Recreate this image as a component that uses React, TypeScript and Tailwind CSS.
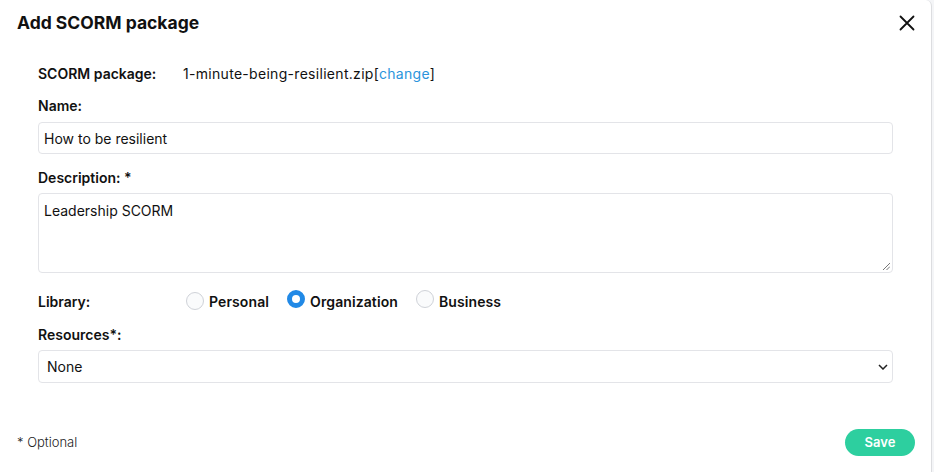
import React from "react";

function Radio({ checked }: { checked?: boolean }) {
  return checked ? (
    <span className="inline-block h-[18px] w-[18px] rounded-full border-[5px] border-[#2189e6] bg-white" />
  ) : (
    <span className="inline-block h-[18px] w-[18px] rounded-full border border-[#cfd2d8] bg-[#fafbfc]" />
  );
}

export default function App() {
  return (
    <div
      className="h-[472px] w-[934px] bg-[#f4f5f7] text-[#111]"
      style={{ fontFamily: "Inter, 'Open Sans', sans-serif" }}
    >
      <div className="flex h-full w-[932px] flex-col rounded-tr-md border-r border-[#dcdde0] bg-white">
        {/* header */}
        <div className="flex h-[46px] items-center justify-between pl-[17px] pr-[12px]">
          <h2 className="text-[17.5px] font-bold text-[#111]">Add SCORM package</h2>
          <button className="flex h-6 w-6 items-center justify-center">
            <svg width="16" height="16" viewBox="0 0 16 16" fill="none" stroke="#111" strokeWidth="1.8" strokeLinecap="round">
              <path d="M1.5 1.5l13 13M14.5 1.5l-13 13" />
            </svg>
          </button>
        </div>

        {/* form */}
        <div className="flex flex-col pl-[38px] pr-[38px] text-[14px]">
          <div className="mt-[17px] flex h-[20px] items-center">
            <span className="w-[145px] font-semibold">SCORM package:</span>
            <span className="tracking-[0.3px]">
              1-minute-being-resilient.zip[<span className="text-[#2a94dc]">change</span>]
            </span>
          </div>

          <label className="mt-[13px] h-[20px] font-semibold leading-[20px]">Name:</label>
          <div className="mt-[6px] flex h-[32px] items-center rounded-[4px] border border-[#e3e4e8] px-[5px]">
            How to be resilient
          </div>

          <label className="mt-[14px] h-[20px] font-semibold leading-[20px]">Description: *</label>
          <div className="relative mt-[5px] h-[80px] rounded-[4px] border border-[#e3e4e8] px-[5px] pt-[6px]">
            Leadership SCORM
            <svg className="absolute bottom-[2px] right-[2px]" width="8" height="8" viewBox="0 0 8 8" stroke="#777" strokeWidth="1">
              <path d="M1 8L8 1M4.5 8L8 4.5" />
            </svg>
          </div>

          <div className="mt-[18px] flex h-[20px] items-center">
            <span className="w-[148px] font-semibold">Library:</span>
            <div className="flex items-center font-semibold tracking-[0.1px]">
              <Radio />
              <span className="ml-[5px]">Personal</span>
              <span className="ml-[18px]"><Radio checked /></span>
              <span className="ml-[5px]">Organization</span>
              <span className="ml-[18px]"><Radio /></span>
              <span className="ml-[5px]">Business</span>
            </div>
          </div>

          <label className="mt-[14px] h-[20px] font-semibold leading-[20px]">Resources*:</label>
          <div className="mt-[5px] flex h-[33px] items-center justify-between rounded-[4px] border border-[#e3e4e8] pl-[8px] pr-[4px]">
            <span>None</span>
            <svg width="10" height="6" viewBox="0 0 10 6" fill="none" stroke="#222" strokeWidth="1.5">
              <path d="M1 1l4 4 4-4" />
            </svg>
          </div>
        </div>

        {/* footer */}
        <div className="mt-auto flex h-[44px] items-start justify-between pl-[17px] pr-[16px] pb-[16px]">
          <span className="mt-[5px] text-[13px] font-light text-[#222]">* Optional</span>
          <button className="mt-[1px] h-[27px] w-[70px] rounded-full bg-[#2dcf9f] text-[13px] font-semibold text-white">
            Save
          </button>
        </div>
      </div>
    </div>
  );
}
